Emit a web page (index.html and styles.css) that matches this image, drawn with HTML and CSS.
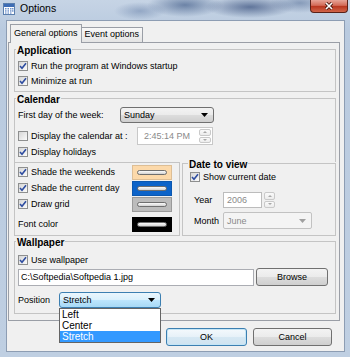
FILE: index.html
```html
<!DOCTYPE html>
<html lang="en">
<head>
    <meta charset="UTF-8">
    <title>Options</title>
    <link rel="stylesheet" href="styles.css">
</head>
<body>
    <div class="window">
        <div class="titlebar">
            <svg class="app-icon" width="12" height="12" viewBox="0 0 12 12">
                <rect x="0.5" y="0.5" width="11" height="11" fill="#fff" stroke="#5b7fae"/>
                <rect x="1" y="1" width="10" height="3" fill="#3e6db5"/>
                <g fill="#6f93cc">
                    <rect x="2" y="5" width="1.5" height="1.5"/><rect x="4.5" y="5" width="1.5" height="1.5"/><rect x="7" y="5" width="1.5" height="1.5"/><rect x="9" y="5" width="1.5" height="1.5"/>
                    <rect x="2" y="7.2" width="1.5" height="1.5"/><rect x="4.5" y="7.2" width="1.5" height="1.5"/><rect x="7" y="7.2" width="1.5" height="1.5"/><rect x="9" y="7.2" width="1.5" height="1.5"/>
                    <rect x="2" y="9.4" width="1.5" height="1.3"/><rect x="4.5" y="9.4" width="1.5" height="1.3"/><rect x="7" y="9.4" width="1.5" height="1.3"/>
                </g>
            </svg>
            <span class="title">Options</span>
            <div class="close-btn">
                <svg width="10" height="8" viewBox="0 0 10 8">
                    <path d="M2 1 L8 7 M8 1 L2 7" stroke="#4a1a12" stroke-width="3.2"/>
                    <path d="M2 1 L8 7 M8 1 L2 7" stroke="#fff" stroke-width="1.6"/>
                </svg>
            </div>
        </div>

        <div class="client">
            <div class="tabs">
                <div class="tab active">General options</div>
                <div class="tab">Event options</div>
            </div>

            <div class="tab-panel">
                <!-- Application -->
                <fieldset class="group app-group">
                    <legend>Application</legend>
                    <div class="check-row">
                        <span class="check"><svg width="8" height="8" viewBox="0 0 8 8"><path d="M1 4 L3 6.2 L7 1.2" fill="none" stroke="#2d4ca0" stroke-width="1.6"/></svg></span>
                        Run the program at Windows startup
                    </div>
                    <div class="check-row">
                        <span class="check"><svg width="8" height="8" viewBox="0 0 8 8"><path d="M1 4 L3 6.2 L7 1.2" fill="none" stroke="#2d4ca0" stroke-width="1.6"/></svg></span>
                        Minimize at run
                    </div>
                </fieldset>

                <!-- Calendar -->
                <fieldset class="group cal-group">
                    <legend>Calendar</legend>
                    <div class="field-row first-day">
                        <span class="field-label week-label">First day of the week:</span>
                        <div class="combo sunday">
                            <span>Sunday</span>
                            <svg class="arrow" width="7" height="4" viewBox="0 0 7 4"><path d="M0 0 H7 L3.5 4 Z" fill="#000"/></svg>
                        </div>
                    </div>
                    <div class="field-row time-row">
                        <span class="check"></span>
                        <span class="field-label at-label">Display the calendar at :</span>
                        <div class="textbox time-box">
                            <span>2:45:14 PM</span>
                            <div class="spinner inner-spin"><span class="up"></span><span class="down"></span></div>
                        </div>
                    </div>
                    <div class="check-row short">
                        <span class="check"><svg width="8" height="8" viewBox="0 0 8 8"><path d="M1 4 L3 6.2 L7 1.2" fill="none" stroke="#2d4ca0" stroke-width="1.6"/></svg></span>
                        Display holidays
                    </div>
                </fieldset>

                <div class="lower-row">
                    <div class="shade-box">
                        <div class="shade-row">
                            <span class="check"><svg width="8" height="8" viewBox="0 0 8 8"><path d="M1 4 L3 6.2 L7 1.2" fill="none" stroke="#2d4ca0" stroke-width="1.6"/></svg></span>
                            Shade the weekends
                            <div class="swatch peach"><span></span></div>
                        </div>
                        <div class="shade-row">
                            <span class="check"><svg width="8" height="8" viewBox="0 0 8 8"><path d="M1 4 L3 6.2 L7 1.2" fill="none" stroke="#2d4ca0" stroke-width="1.6"/></svg></span>
                            Shade the current day
                            <div class="swatch blue"><span></span></div>
                        </div>
                        <div class="shade-row">
                            <span class="check"><svg width="8" height="8" viewBox="0 0 8 8"><path d="M1 4 L3 6.2 L7 1.2" fill="none" stroke="#2d4ca0" stroke-width="1.6"/></svg></span>
                            Draw grid
                            <div class="swatch grey"><span></span></div>
                        </div>
                        <div class="shade-row font-row">
                            Font color
                            <div class="swatch black"><span></span></div>
                        </div>
                    </div>

                    <fieldset class="group date-group">
                        <legend>Date to view</legend>
                        <div class="check-row show-row">
                            <span class="check"><svg width="8" height="8" viewBox="0 0 8 8"><path d="M1 4 L3 6.2 L7 1.2" fill="none" stroke="#2d4ca0" stroke-width="1.6"/></svg></span>
                            Show current date
                        </div>
                        <div class="field-row year-row">
                            <span class="field-label date-label">Year</span>
                            <div class="textbox year-box disabled"><span>2006</span></div>
                            <div class="spinner"><span class="up"></span><span class="down"></span></div>
                        </div>
                        <div class="field-row month-row">
                            <span class="field-label date-label">Month</span>
                            <div class="combo month disabled">
                                <span>June</span>
                                <svg class="arrow" width="7" height="4" viewBox="0 0 7 4"><path d="M0 0 H7 L3.5 4 Z" fill="#a0a0a0"/></svg>
                            </div>
                        </div>
                    </fieldset>
                </div>

                <!-- Wallpaper -->
                <fieldset class="group wall-group">
                    <legend>Wallpaper</legend>
                    <div class="check-row use-row">
                        <span class="check"><svg width="8" height="8" viewBox="0 0 8 8"><path d="M1 4 L3 6.2 L7 1.2" fill="none" stroke="#2d4ca0" stroke-width="1.6"/></svg></span>
                        Use wallpaper
                    </div>
                    <div class="field-row path-row">
                        <div class="textbox path-box"><span>C:\Softpedia\Softpedia 1.jpg</span></div>
                        <button class="btn browse">Browse</button>
                    </div>
                    <div class="field-row position-row">
                        <span class="field-label pos-label">Position</span>
                        <div class="combo-wrap">
                            <div class="combo focused">
                                <span>Stretch</span>
                                <svg class="arrow" width="7" height="4" viewBox="0 0 7 4"><path d="M0 0 H7 L3.5 4 Z" fill="#000"/></svg>
                            </div>
                            <ul class="drop-list">
                                <li>Left</li>
                                <li>Center</li>
                                <li class="selected">Stretch</li>
                            </ul>
                        </div>
                    </div>
                </fieldset>
            </div>

            <div class="dialog-buttons">
                <button class="btn btn-ok">OK</button>
                <button class="btn btn-cancel">Cancel</button>
            </div>
        </div>
    </div>
</body>
</html>
```

FILE: styles.css
```css
* {
    box-sizing: border-box;
}

body {
    margin: 0;
    width: 350px;
    height: 357px;
    overflow: hidden;
    font-family: 'Liberation Sans', Arial, sans-serif;
    font-size: 9px;
    color: #000;
}

.window {
    width: 350px;
    height: 357px;
    display: flex;
    flex-direction: column;
    background:
        radial-gradient(ellipse 38px 12px at 185px 5px, rgba(35, 65, 115, 0.55), transparent),
        radial-gradient(ellipse 45px 11px at 250px 7px, rgba(30, 55, 105, 0.6), transparent),
        radial-gradient(ellipse 26px 9px at 140px 11px, rgba(60, 90, 140, 0.35), transparent),
        radial-gradient(ellipse 30px 10px at 300px 3px, rgba(40, 70, 120, 0.4), transparent),
        linear-gradient(to bottom, #c6d4e5, #b9cadf 30px, #bfcfe2);
}

/* title bar */
.titlebar {
    height: 20px;
    display: flex;
    align-items: flex-start;
    padding-left: 3px;
}

.app-icon {
    margin-top: 3px;
}

.title {
    margin-left: 5px;
    margin-top: 2px;
    font-size: 10.5px;
    line-height: 12px;
}

.close-btn {
    margin-left: auto;
    margin-right: 2px;
    width: 38px;
    height: 13px;
    border: 1px solid #5a2118;
    border-top: none;
    border-radius: 0 0 4px 4px;
    background: linear-gradient(#e7a497, #d36b58 45%, #b9361f 52%, #d1654a);
    display: flex;
    align-items: center;
    justify-content: center;
}

/* client area */
.client {
    margin: 0 5px 5px 6px;
    flex: 1;
    background: #f0f0f0;
    border: 1px solid #8d9db3;
    display: flex;
    flex-direction: column;
    padding: 3px 0 0 1px;
}

.tabs {
    display: flex;
    align-items: flex-end;
    height: 18px;
    margin-left: 2px;
    position: relative;
    z-index: 1;
}

.tab {
    height: 15px;
    padding: 0 3px;
    line-height: 13px;
    border: 1px solid #9a9ea6;
    border-bottom: none;
    background: linear-gradient(#f8f8f8, #e4e4e4);
}

.tab + .tab {
    border-left: none;
}

.tab.active {
    height: 19px;
    margin-bottom: -1px;
    line-height: 17px;
    background: #f0f0f0;
}

.tab-panel {
    width: 332px;
    height: 279px;
    border: 1px solid #9a9ea6;
    padding: 0 3px 0 5px;
    background: #f0f0f0;
}

/* group boxes */
.group {
    margin: 0;
    padding: 2px 3px 3px;
    border: 1px solid #c4c4c4;
    min-width: 0;
}

.group legend {
    margin-left: -2px;
    padding: 2px 1px 0;
    font-weight: bold;
    font-size: 10px;
    line-height: 11px;
}

.check-row {
    display: flex;
    align-items: center;
    height: 15px;
}

.check-row.short {
    height: 13px;
}

.check {
    width: 10px;
    height: 10px;
    margin-right: 3px;
    flex-shrink: 0;
    border: 1px solid #8e8f8f;
    background: linear-gradient(135deg, #d6d6d6, #fbfbfb);
    display: flex;
    align-items: center;
    justify-content: center;
}

.field-row {
    display: flex;
    align-items: center;
}

.field-label {
    flex-shrink: 0;
}

.combo {
    height: 16px;
    border: 1px solid #707070;
    border-radius: 3px;
    background: linear-gradient(#f3f3f3, #ebebeb 50%, #dddddd 50%, #cfcfcf);
    display: flex;
    align-items: center;
    padding: 0 5px 0 3px;
}

.combo .arrow {
    margin-left: auto;
}

.textbox {
    border: 1px solid #abadb3;
    background: #fff;
    display: flex;
    align-items: center;
    padding-left: 3px;
}

.disabled {
    color: #8a8a8a;
}

.spinner {
    width: 11px;
    height: 16px;
    display: flex;
    flex-direction: column;
    gap: 1px;
}

.spinner span {
    flex: 1;
    border: 1px solid #c9c9c9;
    border-radius: 2px;
    background: linear-gradient(#fafafa, #ececec);
    display: flex;
    align-items: center;
    justify-content: center;
}

.spinner .up::after {
    content: "";
    border-left: 2px solid transparent;
    border-right: 2px solid transparent;
    border-bottom: 2px solid #a8a8a8;
}

.spinner .down::after {
    content: "";
    border-left: 2px solid transparent;
    border-right: 2px solid transparent;
    border-top: 2px solid #a8a8a8;
}

/* application */
.app-group {
    padding-bottom: 3px;
}

/* calendar */
.cal-group {
    border-bottom: none;
    padding-top: 1px;
    padding-bottom: 4px;
}

.first-day {
    height: 17px;
}

.week-label {
    width: 102px;
}

.sunday {
    width: 94px;
}

.time-row {
    height: 18px;
    margin-top: 4px;
}

.at-label {
    width: 106px;
}

.time-box {
    width: 76px;
    height: 18px;
    border-color: #c8c8c8;
    color: #8a8a8a;
    padding-left: 6px;
    padding-right: 1px;
}

.inner-spin {
    margin-left: auto;
    height: 14px;
    width: 12px;
}

/* lower row */
.lower-row {
    display: flex;
}

.shade-box {
    width: 166px;
    height: 74px;
    border: 1px solid #c4c4c4;
    padding: 1px 7px 3px 3px;
}

.shade-row {
    display: flex;
    align-items: center;
    height: 16px;
}

.font-row {
    margin-top: 4px;
}

.swatch {
    margin-left: auto;
    width: 40px;
    height: 15px;
    padding: 4px;
    border: 1px solid rgba(0, 0, 0, 0.12);
}

.swatch span {
    display: block;
    height: 100%;
    border: 1px solid #6e6e6e;
    border-radius: 3px;
    background: linear-gradient(#fbfbfb, #e6e6e6 50%, #d2d2d2);
}

.peach { background: #fcd9aa; }
.blue { background: #0c63c9; }
.grey { background: #bcbcbc; border-color: #9a9a9a; }
.black { background: #000; }

.date-group {
    width: 154px;
    height: 79px;
    margin-left: 2px;
    margin-top: -5px;
    padding: 0 3px 0 7px;
}

.show-row {
    height: 14px;
}

.date-label {
    width: 29px;
    margin-left: 4px;
}

.year-row {
    margin-top: 8px;
    height: 16px;
}

.year-box {
    width: 39px;
    height: 16px;
    border-color: #bcbcbc;
    margin-right: 2px;
}

.month-row {
    margin-top: 4px;
}

.month {
    width: 89px;
    height: 17px;
    border-color: #c2c2c2;
    border-radius: 2px;
    background: #f4f4f4;
}

/* wallpaper */
.wall-group {
    margin-top: -1px;
    padding-top: 5px;
    padding-bottom: 5px;
}

.use-row {
    height: 14px;
}

.path-row {
    margin-top: 1px;
}

.path-box {
    width: 236px;
    height: 17px;
    padding-left: 2px;
}

.browse {
    width: 72px;
    height: 15px;
    margin-left: 2px;
}

.position-row {
    margin-top: 6px;
}

.pos-label {
    width: 41px;
}

.combo-wrap {
    position: relative;
}

.combo.focused {
    width: 102px;
    border-color: #3c7fb1;
    background: linear-gradient(#eaf6fd, #d9f0fc 50%, #bee6fd 50%, #a7d9f5);
}

.drop-list {
    position: absolute;
    top: 16px;
    left: 0;
    z-index: 10;
    width: 102px;
    margin: 0;
    padding: 0;
    list-style: none;
    background: #fff;
    border: 1px solid #646464;
    font-size: 10px;
}

.drop-list li {
    height: 11px;
    line-height: 11px;
    padding-left: 2px;
}

.drop-list .selected {
    background: #3399ff;
    color: #fff;
}

/* buttons */
.btn {
    height: 18px;
    padding: 0;
    border: 1px solid #707070;
    border-radius: 3px;
    background: linear-gradient(#f3f3f3, #ebebeb 50%, #dddddd 50%, #cfcfcf);
    font-family: inherit;
    font-size: 9px;
    color: #000;
}

.dialog-buttons {
    display: flex;
    justify-content: flex-end;
    gap: 6px;
    margin-top: 7px;
    padding-right: 12px;
}

.btn-ok {
    width: 81px;
    border-color: #3c7fb1;
    box-shadow: inset 0 0 0 1px #c4e5f6;
    background: linear-gradient(#f4f9fc, #e6f1f8 50%, #d6e8f3 50%, #cfe3f0);
}

.btn-cancel {
    width: 79px;
}
```
